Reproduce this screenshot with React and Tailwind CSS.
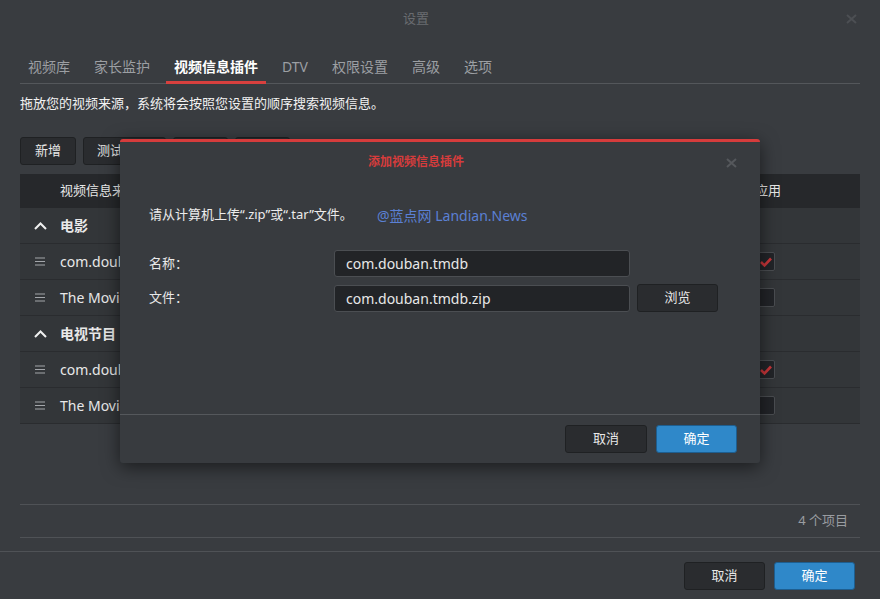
import React from "react";

const tabs = ["视频库", "家长监护", "视频信息插件", "DTV", "权限设置", "高级", "选项"];

const rows = [
  { type: "group", label: "电影" },
  { type: "item", label: "com.douban.tmdb", checked: true },
  { type: "item", label: "The Movie Database", checked: false },
  { type: "group", label: "电视节目" },
  { type: "item", label: "com.douban.tmdb", checked: true },
  { type: "item", label: "The Movie Database", checked: false },
];

function CloseX({ color }) {
  return (
    <svg width="11" height="10" viewBox="0 0 11 10">
      <path d="M1 1 L10 9 M10 1 L1 9" stroke={color} strokeWidth="2" fill="none" />
    </svg>
  );
}

function Handle() {
  return (
    <svg width="10" height="9" viewBox="0 0 10 9">
      <path d="M0 1 H10 M0 4.5 H10 M0 8 H10" stroke="#a3a6aa" strokeWidth="1.2" />
    </svg>
  );
}

function Chevron() {
  return (
    <svg width="13" height="8" viewBox="0 0 13 8">
      <path d="M1 7 L6.5 1.5 L12 7" stroke="#f0f0f0" strokeWidth="2" fill="none" />
    </svg>
  );
}

function Checkbox({ checked }) {
  return (
    <div className="w-[18px] h-[19px] rounded-[2px] border border-[#4a4d51] bg-[#222428] flex items-center justify-center">
      {checked && (
        <svg width="14" height="12" viewBox="0 0 14 12">
          <path d="M2 6 L5.5 9.5 L12 2.5" stroke="#c8363a" strokeWidth="2.6" fill="none" />
        </svg>
      )}
    </div>
  );
}

function DarkButton({ children, className = "" }) {
  return (
    <button className={"h-[28px] rounded-[3px] bg-[#2a2c2f] border border-[#1f2123] text-[13px] text-[#e8e8e8] flex items-center justify-center " + className}>
      {children}
    </button>
  );
}

function BlueButton({ children, className = "" }) {
  return (
    <button className={"h-[28px] rounded-[3px] bg-[#2f88c9] border border-[#1e5e8f] text-[13px] text-white flex items-center justify-center " + className}>
      {children}
    </button>
  );
}

export default function App() {
  return (
    <div
      className="relative w-[880px] h-[599px] bg-[#393c40] overflow-hidden flex flex-col text-[#e8e8e8]"
      style={{ fontFamily: '"Noto Sans", "Noto Sans CJK SC", sans-serif' }}
    >
      {/* Title */}
      <div className="relative h-[38px] flex items-center justify-center pr-[48px] text-[13px] text-[#696c70]">
        设置
        <div className="absolute right-[23px] top-[14px]">
          <CloseX color="#4c4f53" />
        </div>
      </div>

      <div className="flex-1 flex flex-col px-5">
        {/* Tabs */}
        <div className="mt-[11px] h-[35px] border-b border-[#54575b] flex gap-2">
          {tabs.map((t) => (
            <div
              key={t}
              className={
                t === "视频信息插件"
                  ? "px-2 flex items-center text-[14px] font-bold text-white border-b-[3px] border-[#d8403e] -mb-px pt-[2px]"
                  : "px-2 flex items-center text-[14px] text-[#9c9fa3]"
              }
            >
              {t}
            </div>
          ))}
        </div>

        <div className="h-[38px] flex items-center text-[13px] text-[#f2f2f2] pt-[1px]">
          拖放您的视频来源，系统将会按照您设置的顺序搜索视频信息。
        </div>

        {/* Toolbar */}
        <div className="mt-[15px] flex gap-[7px]">
          <DarkButton className="w-[56px]">新增</DarkButton>
          <DarkButton className="w-[83px] justify-start pl-[13px]">测试连接</DarkButton>
          <DarkButton className="w-[55px]">删除</DarkButton>
          <DarkButton className="w-[55px]">编辑</DarkButton>
        </div>

        {/* Table */}
        <div className="mt-[9px]">
          <div className="h-[34px] bg-[#26282b] flex items-center text-[13px]">
            <div className="flex-1 pl-[40px]">视频信息来源</div>
            <div className="w-[105px]">应用</div>
          </div>
          {rows.map((r, i) => (
            <div key={i} className="h-[36px] bg-[#333639] border-b border-[#2a2c2f] flex items-center">
              <div className="w-[40px] flex justify-center">
                {r.type === "group" ? <Chevron /> : <Handle />}
              </div>
              <div className={"flex-1 text-[14px] " + (r.type === "group" ? "font-bold" : "")}>{r.label}</div>
              <div className="w-[103px]">{r.type === "item" && <Checkbox checked={r.checked} />}</div>
            </div>
          ))}
        </div>

        <div className="flex-1" />

        <div className="h-[34px] border-t border-b border-[#4f5256] flex items-center justify-end pr-3 text-[13px] text-[#9a9da1]">
          4 个项目
        </div>
        <div className="h-[13px]" />
      </div>

      {/* Bottom bar */}
      <div className="h-[48px] border-t border-[#4f5256] flex items-center justify-end gap-[9px] pr-[25px]">
        <DarkButton className="w-[81px]">取消</DarkButton>
        <BlueButton className="w-[81px]">确定</BlueButton>
      </div>

      {/* Modal */}
      <div className="absolute left-[120px] top-[139px] w-[640px] h-[324px] bg-[#383b3f] border-t-[3px] border-[#d63c3c] rounded-[3px] shadow-[0_4px_18px_rgba(0,0,0,0.55)] flex flex-col">
        <div className="relative h-[40px] flex items-center justify-center pr-[48px] text-[12px] font-bold text-[#d63c3c]">
          添加视频信息插件
          <div className="absolute right-[23px] top-[16px]">
            <CloseX color="#55585c" />
          </div>
        </div>

        <div className="flex-1 pl-[29px] pt-[23px]">
          <div className="h-[20px] flex items-center text-[13px] text-[#ececec]">
            <span className="w-[228px] shrink-0">请从计算机上传“.zip”或“.tar”文件。</span>
            <span className="text-[14px] text-[#5b80d4]">@蓝点网 Landian.News</span>
          </div>

          <div className="mt-[25px] flex items-center">
            <div className="w-[185px] shrink-0 text-[13px]">名称：</div>
            <div className="w-[296px] h-[27px] bg-[#222427] border border-[#4b4e52] rounded-[3px] pl-[11px] flex items-center text-[14px]">
              com.douban.tmdb
            </div>
          </div>

          <div className="mt-[7px] flex items-center">
            <div className="w-[185px] shrink-0 text-[13px]">文件：</div>
            <div className="w-[296px] h-[27px] bg-[#222427] border border-[#4b4e52] rounded-[3px] pl-[11px] flex items-center text-[14px]">
              com.douban.tmdb.zip
            </div>
            <DarkButton className="ml-[7px] w-[81px] h-[27px]">浏览</DarkButton>
          </div>
        </div>

        <div className="h-[49px] border-t border-[#55585c] flex items-center justify-end gap-[9px] pr-[23px]">
          <DarkButton className="w-[82px]">取消</DarkButton>
          <BlueButton className="w-[81px]">确定</BlueButton>
        </div>
      </div>
    </div>
  );
}
